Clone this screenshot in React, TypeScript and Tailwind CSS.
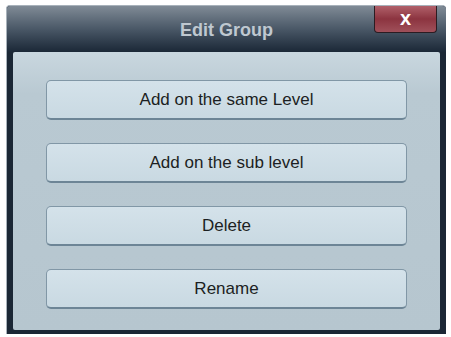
import React from "react";

const items = ["Add on the same Level", "Add on the sub level", "Delete", "Rename"];

const App = () => {
  return (
    <div className="w-[451px] h-[337px] bg-white pt-[5px] pl-[6px]">
      <div className="w-[440px] h-[329px] flex flex-col rounded-t-[4px] bg-[#1b2735] border-l border-t border-[#a8b2bb] overflow-hidden">
        {/* title bar */}
        <div className="h-[46px] grid grid-cols-[1fr_auto_1fr] bg-gradient-to-b from-[#808b96] via-[#4a5867] via-50% to-[#1b2837]">
          <div />
          <div className="pt-[13px] text-[18px] leading-[22px] font-bold text-[#bfc8d0] [font-family:'Liberation_Sans',Arial,sans-serif]">
            Edit Group
          </div>
          <div className="flex justify-end pr-[9px]">
            <button className="w-[63px] h-[27px] rounded-b-[4px] border border-t-0 border-[#2b1c22] bg-gradient-to-b from-[#b0606a] via-[#8c3440] to-[#a0505a] flex items-center justify-center pb-[2px] text-white text-[20px] font-bold leading-none [font-family:'Liberation_Sans',Arial,sans-serif]">
              x
            </button>
          </div>
        </div>
        {/* content */}
        <div className="mx-[6px] h-[278px] rounded-[2px] bg-gradient-to-b from-[#c9d7df] via-[#b9c9d2] via-15% to-[#b6c6cf] flex flex-col gap-[23px] pt-[28px] px-[33px]">
          {items.map((t) => (
            <button
              key={t}
              className="h-[40px] rounded-[5px] border border-[#8197a6] border-b-2 border-b-[#6d8596] bg-gradient-to-b from-[#d4e2ea] to-[#c9d9e2] text-[17px] text-[#1c1f22] [font-family:'Liberation_Sans',Arial,sans-serif]"
            >
              {t}
            </button>
          ))}
        </div>
      </div>
    </div>
  );
};

export default App;
